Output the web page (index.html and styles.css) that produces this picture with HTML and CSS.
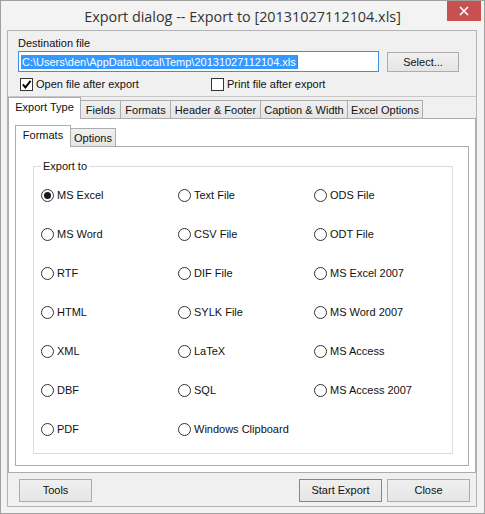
FILE: index.html
```html
<!DOCTYPE html>
<html>
<head>
<meta charset="utf-8">
<link rel="stylesheet" href="styles.css">
</head>
<body>
<div class="window">
  <div class="titlebar">
    <span class="title">Export dialog -- Export to [20131027112104.xls]</span>
    <div class="close"><svg width="10" height="10" viewBox="0 0 10 10"><path d="M1 1 L9 9 M9 1 L1 9" stroke="#fff" stroke-width="1.6" fill="none"/></svg></div>
  </div>
  <div class="client">
    <div class="dest">
      <div class="label">Destination file</div>
      <div class="dest-row">
        <div class="input"><span class="sel">C:\Users\den\AppData\Local\Temp\20131027112104.xls</span><span class="caret"></span></div>
        <div class="btn btn-select">Select...</div>
      </div>
      <div class="checks">
        <div class="chk chk-open"><span class="box"><svg width="11" height="11" viewBox="0 0 11 11"><path d="M1.8 5.3 L4.4 8.4 L9.6 1.8" stroke="#000" stroke-width="1.9" fill="none"/></svg></span>Open file after export</div>
        <div class="chk"><span class="box"></span>Print file after export</div>
      </div>
    </div>
    <div class="tabs">
      <div class="tab active t-export">Export Type</div>
      <div class="tab t-fields">Fields</div>
      <div class="tab t-formats">Formats</div>
      <div class="tab t-header">Header &amp; Footer</div>
      <div class="tab t-caption">Caption &amp; Width</div>
      <div class="tab t-excel">Excel Options</div>
    </div>
    <div class="page outer-page">
      <div class="tabs inner-tabs">
        <div class="tab active t-iformats">Formats</div>
        <div class="tab t-ioptions">Options</div>
      </div>
      <div class="page inner-page">
        <fieldset class="group">
          <legend>Export to</legend>
          <div class="grid">
            <div class="radio"><span class="circle on"></span>MS Excel</div>
            <div class="radio"><span class="circle"></span>Text File</div>
            <div class="radio"><span class="circle"></span>ODS File</div>
            <div class="radio"><span class="circle"></span>MS Word</div>
            <div class="radio"><span class="circle"></span>CSV File</div>
            <div class="radio"><span class="circle"></span>ODT File</div>
            <div class="radio"><span class="circle"></span>RTF</div>
            <div class="radio"><span class="circle"></span>DIF File</div>
            <div class="radio"><span class="circle"></span>MS Excel 2007</div>
            <div class="radio"><span class="circle"></span>HTML</div>
            <div class="radio"><span class="circle"></span>SYLK File</div>
            <div class="radio"><span class="circle"></span>MS Word 2007</div>
            <div class="radio"><span class="circle"></span>XML</div>
            <div class="radio"><span class="circle"></span>LaTeX</div>
            <div class="radio"><span class="circle"></span>MS Access</div>
            <div class="radio"><span class="circle"></span>DBF</div>
            <div class="radio"><span class="circle"></span>SQL</div>
            <div class="radio"><span class="circle"></span>MS Access 2007</div>
            <div class="radio"><span class="circle"></span>PDF</div>
            <div class="radio"><span class="circle"></span>Windows Clipboard</div>
          </div>
        </fieldset>
      </div>
    </div>
    <div class="buttons">
      <div class="btn btn-tools">Tools</div>
      <div class="spacer"></div>
      <div class="btn btn-wide default">Start Export</div>
      <div class="btn btn-wide">Close</div>
    </div>
  </div>
</div>
</body>
</html>
```
FILE: styles.css
```css
* { box-sizing: border-box; }
html, body { margin: 0; padding: 0; }
body {
  width: 485px;
  height: 514px;
  font-family: "Liberation Sans", Arial, sans-serif;
  font-size: 11px;
  line-height: 13px;
  color: #111;
  background: #fff;
}
.window {
  width: 485px;
  height: 514px;
  border: 1px solid #a0a0a0;
  background: #f3f3f3;
  position: relative;
  display: flex;
  flex-direction: column;
}
.titlebar {
  height: 29px;
  flex: none;
  display: flex;
  align-items: center;
  justify-content: center;
  font-family: "Open Sans", "Noto Sans", sans-serif;
  font-size: 14.4px;
  color: #333;
  padding-top: 1px;
}
.close {
  position: absolute;
  top: 0;
  right: 3px;
  width: 34px;
  height: 20px;
  background: #c75050;
  display: flex;
  align-items: center;
  justify-content: center;
}
.close svg { display: block; }
.client {
  margin-left: 6px;
  width: 470px;
  height: 477px;
  flex: none;
  border: 1px solid #b4b4b4;
  background: #f0f0f0;
  display: flex;
  flex-direction: column;
}
.dest {
  height: 66px;
  flex: none;
  padding: 6px 0 0 10px;
  border-bottom: 1px solid #c6c6c6;
}
.dest-row {
  display: flex;
  margin-top: 1px;
  gap: 8px;
}
.input {
  width: 361px;
  height: 21px;
  border: 1px solid #3c8fe0;
  background: #fff;
  display: flex;
  align-items: center;
  padding-left: 2px;
}
.sel {
  background: #3399ff;
  color: #fff;
  line-height: 14px;
  padding: 0 1px;
}
.caret {
  width: 1px;
  height: 14px;
  background: #c86400;
}
.btn {
  height: 21px;
  border: 1px solid #acacac;
  background: linear-gradient(#f0f0f0, #e5e5e5);
  display: flex;
  align-items: center;
  justify-content: center;
  flex: none;
}
.btn-select { width: 72px; margin-top: 1px; height: 20px; }
.checks {
  display: flex;
  margin-top: 6px;
  padding-left: 2px;
}
.chk {
  display: flex;
  align-items: center;
  gap: 3px;
  height: 13px;
}
.chk-open { width: 191px; }
.box {
  width: 13px;
  height: 13px;
  border: 1px solid #333;
  background: #fff;
  display: flex;
  align-items: center;
  justify-content: center;
}
.box svg { display: block; }
.tabs {
  display: flex;
  align-items: flex-end;
  height: 21px;
  flex: none;
  position: relative;
  z-index: 1;
}
.tab {
  height: 18px;
  border: 1px solid #acacac;
  border-bottom: none;
  background: linear-gradient(#f0f0f0, #e5e5e5);
  display: flex;
  align-items: center;
  justify-content: center;
  flex: none;
  margin-left: -1px;
  padding-top: 1px;
}
.tab.active {
  height: 22px;
  margin-bottom: -1px;
  background: #fff;
  margin-left: 0;
  position: relative;
  z-index: 2;
  padding-top: 0;
  padding-bottom: 3px;
}
.t-export { width: 73px; }
.t-fields { width: 41px; }
.t-formats { width: 51px; }
.t-header { width: 91px; }
.t-caption { width: 88px; }
.t-excel { width: 76px; }
.page {
  border: 1px solid #acacac;
  background: #fff;
}
.outer-page {
  height: 355px;
  flex: none;
  display: flex;
  flex-direction: column;
  padding: 7px 6px 6px 6px;
}
.inner-tabs {
  height: 20px;
}
.t-iformats { width: 56px; height: 21px; }
.t-ioptions { width: 46px; }
.inner-page {
  flex: 1;
  display: flex;
  flex-direction: column;
  padding: 0 15px 11px 17px;
}
.group {
  flex: 1;
  margin: 13px 0 0 0;
  border: 1px solid #dcdcdc;
  padding: 0 0 0 7px;
  min-width: 0;
}
.group legend {
  padding: 0 2px;
  line-height: 13px;
}
.grid {
  display: grid;
  grid-template-columns: 137px 136px auto;
  grid-auto-rows: 13px;
  row-gap: 26px;
  padding-top: 16px;
}
.radio {
  display: flex;
  align-items: center;
  gap: 3px;
  height: 13px;
}
.circle {
  width: 13px;
  height: 13px;
  border: 1px solid #333;
  border-radius: 50%;
  background: #fff;
  display: flex;
  align-items: center;
  justify-content: center;
  flex: none;
}
.circle.on::after {
  content: "";
  width: 7px;
  height: 7px;
  border-radius: 50%;
  background: #1a1a1a;
}
.buttons {
  display: flex;
  margin-top: 6px;
  padding: 0 6px 0 11px;
  gap: 5px;
}
.spacer { flex: 1; }
.btn-tools { width: 73px; height: 23px; }
.btn-wide { width: 83px; height: 23px; }
.btn.default { border-color: #3399ff; }
```
